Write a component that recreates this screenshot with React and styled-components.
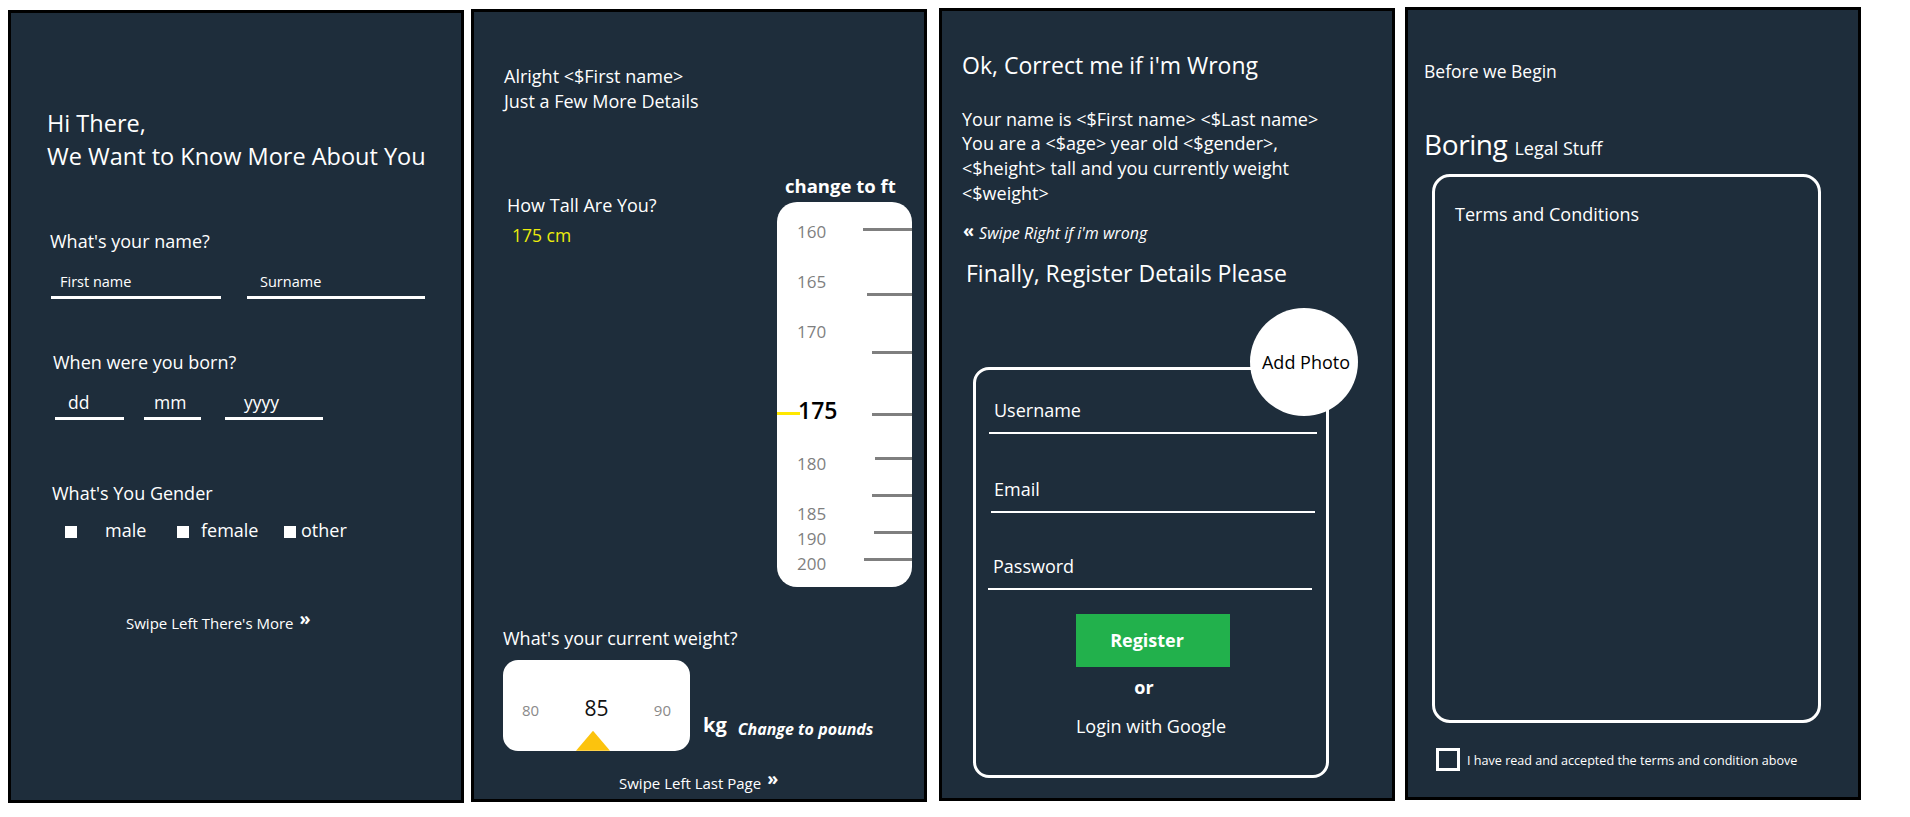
import React from 'react'
import styled, { createGlobalStyle } from 'styled-components'

const GlobalStyle = createGlobalStyle`
  html, body {
    margin: 0;
    padding: 0;
    background: #fff;
  }
  body {
    font-family: "Open Sans", "Noto Sans", sans-serif;
    -webkit-font-smoothing: antialiased;
  }
`

const Page = styled.div`
  box-sizing: border-box;
  width: 1910px;
  height: 817px;
  padding: 7px 0 0 8px;
  display: flex;
  align-items: flex-start;
  overflow: hidden;
`

const Screen = styled.section`
  box-sizing: border-box;
  flex: none;
  width: 456px;
  height: 793px;
  margin-top: ${p => p.$top || 0}px;
  margin-left: ${p => p.$left || 0}px;
  background: #1e2d3b;
  border: 3px solid #000;
  color: #fff;
  display: flex;
  flex-direction: column;
  align-items: flex-start;
  position: relative;
`

/* ---------- shared text ---------- */

const Greeting = styled.h1`
  margin: ${p => p.$mt}px 0 0 ${p => p.$ml}px;
  font-size: 23.5px;
  line-height: 33px;
  font-weight: 400;
`

const Question = styled.p`
  margin: ${p => p.$mt}px 0 0 ${p => p.$ml}px;
  font-size: 18px;
  line-height: ${p => p.$lh || 24}px;
  font-weight: 400;
  white-space: nowrap;
`

const Title = styled.h2`
  margin: ${p => p.$mt}px 0 0 ${p => p.$ml}px;
  font-size: 23px;
  line-height: 30px;
  font-weight: 400;
  white-space: nowrap;
`

const Hint = styled.p`
  margin: ${p => p.$mt}px 0 0 ${p => p.$ml}px;
  font-size: 15px;
  line-height: 20px;
  white-space: nowrap;
`

const Chevron = styled.span`
  display: inline-block;
  margin-left: 6px;
  font-weight: 700;
  font-size: 18px;
  line-height: 20px;
  position: relative;
  top: -4px;
`

/* ---------- underline fields ---------- */

const FieldRow = styled.div`
  display: flex;
  margin: ${p => p.$mt}px 0 0 ${p => p.$ml}px;
  gap: ${p => p.$gap}px;
`

const LineField = styled.div`
  box-sizing: border-box;
  width: ${p => p.$w}px;
  margin-left: ${p => p.$ml || 0}px;
  padding: 0 0 4px ${p => p.$pl}px;
  border-bottom: 3px solid #fff;
  font-size: ${p => p.$size}px;
  line-height: ${p => p.$lh}px;
  white-space: nowrap;
`

/* ---------- gender ---------- */

const OptionRow = styled.div`
  display: flex;
  margin: 13px 0 0 54px;
`

const Option = styled.label`
  display: flex;
  align-items: flex-start;
  width: ${p => (p.$w ? `${p.$w}px` : 'auto')};
  font-size: 18px;
  line-height: 24px;
`

const Square = styled.span`
  width: 12px;
  height: 12px;
  margin: 8px ${p => p.$gap}px 0 0;
  background: #fff;
  flex: none;
`

/* ---------- height ruler ---------- */

const HeightRow = styled.div`
  display: flex;
  width: 100%;
  margin-top: 60.3px;
`

const HeightInfo = styled.div`
  flex: 1;
  padding: 19.2px 0 0 33px;
  display: flex;
  flex-direction: column;
  align-items: flex-start;
`

const HeightValue = styled.span`
  margin: 6.2px 0 0 5px;
  font-size: 17.5px;
  line-height: 24px;
  color: #ecec0c;
`

const RulerColumn = styled.div`
  width: 135px;
  margin-right: 12px;
  display: flex;
  flex-direction: column;
`

const UnitSwitch = styled.span`
  margin-left: 8px;
  font-size: 18.5px;
  line-height: 24px;
  font-weight: 700;
  white-space: nowrap;
`

const Ruler = styled.div`
  position: relative;
  margin-top: 4px;
  height: 385px;
  background: #fff;
  border-radius: 20px;
  overflow: hidden;
`

const RulerLabel = styled.span`
  position: absolute;
  left: 20px;
  font-size: 17px;
  line-height: 20px;
  color: #7f7f7f;
`

const RulerCurrent = styled.span`
  position: absolute;
  left: 21px;
  top: 194px;
  font-size: 23px;
  line-height: 28px;
  font-weight: 600;
  color: #000;
`

const RulerTick = styled.span`
  position: absolute;
  right: 0;
  height: 3px;
  background: #7f7f7f;
`

const RulerMarker = styled.span`
  position: absolute;
  left: 0;
  top: 210px;
  width: 23px;
  height: 3px;
  background: #ffe800;
`

/* ---------- weight dial ---------- */

const WeightRow = styled.div`
  display: flex;
  align-items: flex-start;
  margin: 10px 0 0 29px;
`

const Dial = styled.div`
  box-sizing: border-box;
  position: relative;
  width: 187px;
  height: 91px;
  padding: 35.8px 19px 0;
  background: #fff;
  border-radius: 15px;
  display: flex;
  align-items: baseline;
  justify-content: space-between;
`

const DialValue = styled.span`
  font-size: ${p => (p.$main ? 21 : 15)}px;
  line-height: 24px;
  color: ${p => (p.$main ? '#111' : '#8a8a8a')};
`

const DialPointer = styled.span`
  position: absolute;
  left: 73px;
  bottom: 0;
  width: 34px;
  height: 20px;
  background: #fcc30d;
  clip-path: polygon(50% 0, 100% 100%, 0 100%);
`

const Unit = styled.span`
  margin: 53.2px 0 0 13px;
  font-size: 20px;
  line-height: 24px;
  font-weight: 700;
`

const UnitLink = styled.span`
  margin: 59.6px 0 0 11px;
  font-size: 16px;
  line-height: 20px;
  font-weight: 700;
  font-style: italic;
  white-space: nowrap;
`

/* ---------- summary / register ---------- */

const Summary = styled.p`
  margin: 26.5px 0 0 20px;
  font-size: 18px;
  line-height: 24.7px;
  white-space: nowrap;
`

const SwipeBack = styled.p`
  margin: 16.4px 0 0 21px;
  font-size: 16px;
  line-height: 20px;
  font-style: italic;
  white-space: nowrap;
`

const BackChevron = styled.span`
  display: inline-block;
  margin-right: 5px;
  font-weight: 700;
  font-style: normal;
  font-size: 18px;
  position: relative;
  top: -2px;
`

const FormCard = styled.div`
  box-sizing: border-box;
  position: relative;
  width: 356px;
  height: 411px;
  margin: 78.9px 0 0 31px;
  border: 3px solid #fff;
  border-radius: 16px;
  display: flex;
  flex-direction: column;
  align-items: flex-start;
`

const FormField = styled.div`
  box-sizing: border-box;
  width: ${p => p.$w}px;
  margin: ${p => p.$mt}px 0 0 ${p => p.$ml}px;
  padding: 0 0 10px ${p => p.$pl}px;
  border-bottom: 2px solid #fff;
  font-size: 18px;
  line-height: 24px;
`

const RegisterButton = styled.button`
  align-self: center;
  width: 154px;
  height: 53px;
  margin: 24px 0 0 4px;
  border: none;
  background: #22b14c;
  color: #fff;
  font-family: inherit;
  font-size: 18px;
  font-weight: 700;
  padding: 0 12px 0 0;
`

const CenterText = styled.span`
  align-self: center;
  margin: ${p => p.$mt}px ${p => p.$shift || 0}px 0 0;
  font-size: 18px;
  line-height: 24px;
  font-weight: ${p => (p.$bold ? 700 : 400)};
`

const PhotoBadge = styled.div`
  position: absolute;
  left: 274px;
  top: -62px;
  width: 108px;
  height: 108px;
  border-radius: 50%;
  background: #fff;
  color: #000;
  display: flex;
  align-items: center;
  justify-content: center;
  font-size: 18px;
  white-space: nowrap;
  padding-left: 4px;
  box-sizing: border-box;
`

/* ---------- legal ---------- */

const Lead = styled.p`
  margin: 49.2px 0 0 16px;
  font-size: 17.5px;
  line-height: 24px;
`

const LegalHeading = styled.div`
  display: flex;
  align-items: baseline;
  gap: 7px;
  margin: 43.1px 0 0 16px;
`

const Big = styled.span`
  font-size: 28px;
  line-height: 36px;
  letter-spacing: -0.4px;
`

const Small = styled.span`
  font-size: 18px;
  line-height: 24px;
`

const TermsBox = styled.div`
  box-sizing: border-box;
  width: 389px;
  height: 549px;
  margin: 11.7px 0 0 24px;
  padding: 25px 20px;
  border: 3px solid #fff;
  border-radius: 18px;
  font-size: 18px;
  line-height: 24px;
`

const ConsentRow = styled.label`
  display: flex;
  align-items: flex-start;
  gap: 7px;
  margin: 25px 0 0 28px;
`

const CheckBox = styled.span`
  box-sizing: border-box;
  width: 24px;
  height: 23px;
  border: 3px solid #fff;
  flex: none;
`

const ConsentText = styled.span`
  margin-top: 5px;
  font-size: 12.6px;
  line-height: 16px;
  white-space: nowrap;
`

const rulerLabels = [
  { v: '160', top: 20.4 },
  { v: '165', top: 70.4 },
  { v: '170', top: 120.4 },
  { v: '180', top: 252.4 },
  { v: '185', top: 302.4 },
  { v: '190', top: 327.4 },
  { v: '200', top: 352.4 },
]

const rulerTicks = [
  { top: 26, left: 86 },
  { top: 91, left: 90 },
  { top: 149, left: 95 },
  { top: 211, left: 95 },
  { top: 255, left: 98 },
  { top: 292, left: 95 },
  { top: 329, left: 97 },
  { top: 356, left: 87 },
]

function AboutYou() {
  return (
    <Screen $top={3}>
      <Greeting $mt={94.4} $ml={36}>
        Hi There,
        <br />
        We Want to Know More About You
      </Greeting>

      <Question $mt={55.6} $ml={39}>What's your name?</Question>
      <FieldRow $mt={19} $ml={40} $gap={26}>
        <LineField $w={170} $pl={9} $size={14.5} $lh={20}>First name</LineField>
        <LineField $w={178} $pl={13} $size={14.5} $lh={20}>Surname</LineField>
      </FieldRow>

      <Question $mt={51} $ml={42}>When were you born?</Question>
      <FieldRow $mt={17} $ml={44} $gap={20}>
        <LineField $w={69} $pl={13} $size={17.5} $lh={22}>dd</LineField>
        <LineField $w={57} $pl={10} $size={17.5} $lh={22}>mm</LineField>
        <LineField $w={98} $pl={19} $ml={4} $size={17.5} $lh={22}>yyyy</LineField>
      </FieldRow>

      <Question $mt={61} $ml={41}>What's You Gender</Question>
      <OptionRow>
        <Option $w={112}><Square $gap={28} />male</Option>
        <Option $w={107}><Square $gap={12} />female</Option>
        <Option><Square $gap={5} />other</Option>
      </OptionRow>

      <Hint $mt={70} $ml={115}>
        Swipe Left There's More<Chevron>»</Chevron>
      </Hint>
    </Screen>
  )
}

function Measurements() {
  return (
    <Screen $top={2} $left={7}>
      <Question $mt={51.5} $ml={30} $lh={25}>
        Alright &lt;$First name&gt;
        <br />
        Just a Few More Details
      </Question>

      <HeightRow>
        <HeightInfo>
          <Question $mt={0} $ml={0}>How Tall Are You?</Question>
          <HeightValue>175 cm</HeightValue>
        </HeightInfo>
        <RulerColumn>
          <UnitSwitch>change to ft</UnitSwitch>
          <Ruler>
            {rulerTicks.map(t => (
              <RulerTick key={t.top} style={{ top: t.top, left: t.left }} />
            ))}
            {rulerLabels.map(l => (
              <RulerLabel key={l.v} style={{ top: l.top }}>{l.v}</RulerLabel>
            ))}
            <RulerMarker />
            <RulerCurrent>175</RulerCurrent>
          </Ruler>
        </RulerColumn>
      </HeightRow>

      <Question $mt={39} $ml={29}>What's your current weight?</Question>
      <WeightRow>
        <Dial>
          <DialValue>80</DialValue>
          <DialValue $main>85</DialValue>
          <DialValue>90</DialValue>
          <DialPointer />
        </Dial>
        <Unit>kg</Unit>
        <UnitLink>Change to pounds</UnitLink>
      </WeightRow>

      <Hint $mt={21.2} $ml={145}>
        Swipe Left Last Page<Chevron>»</Chevron>
      </Hint>
    </Screen>
  )
}

function Register() {
  return (
    <Screen $top={1} $left={12}>
      <Title $mt={39.1} $ml={20}>Ok, Correct me if i'm Wrong</Title>
      <Summary>
        Your name is &lt;$First name&gt; &lt;$Last name&gt;
        <br />
        You are a &lt;$age&gt; year old &lt;$gender&gt;,
        <br />
        &lt;$height&gt; tall and you currently weight
        <br />
        &lt;$weight&gt;
      </Summary>
      <SwipeBack>
        <BackChevron>«</BackChevron>Swipe Right if i'm wrong
      </SwipeBack>
      <Title $mt={15.3} $ml={24}>Finally, Register Details Please</Title>

      <FormCard>
        <FormField $w={328} $mt={28} $ml={13} $pl={5}>Username</FormField>
        <FormField $w={324} $mt={43} $ml={15} $pl={3}>Email</FormField>
        <FormField $w={324} $mt={41} $ml={12} $pl={5}>Password</FormField>
        <RegisterButton>Register</RegisterButton>
        <CenterText $mt={8} $shift={14} $bold>or</CenterText>
        <CenterText $mt={15}>Login with Google</CenterText>
        <PhotoBadge>Add Photo</PhotoBadge>
      </FormCard>
    </Screen>
  )
}

function Legal() {
  return (
    <Screen $left={10}>
      <Lead>Before we Begin</Lead>
      <LegalHeading>
        <Big>Boring</Big>
        <Small>Legal Stuff</Small>
      </LegalHeading>
      <TermsBox>Terms and Conditions</TermsBox>
      <ConsentRow>
        <CheckBox />
        <ConsentText>I have read and accepted the terms and condition above</ConsentText>
      </ConsentRow>
    </Screen>
  )
}

export default function App() {
  return (
    <>
      <GlobalStyle />
      <Page>
        <AboutYou />
        <Measurements />
        <Register />
        <Legal />
      </Page>
    </>
  )
}
